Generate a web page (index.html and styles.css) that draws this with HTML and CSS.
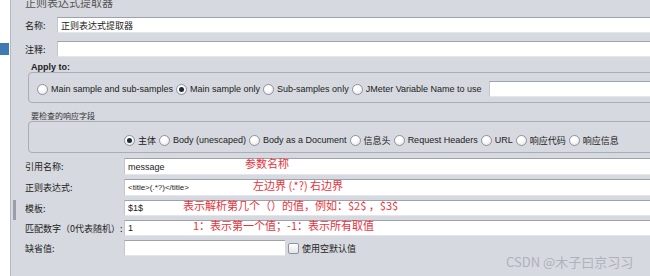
FILE: index.html
```html
<!DOCTYPE html>
<html>
<head>
    <title>正则表达式提取器</title>
    <link rel="stylesheet" href="styles.css">
</head>
<body>
    <div class="tree-strip">
        <div class="tree-marker"></div>
    </div>

    <div class="panel">
        <div class="title">正则表达式提取器</div>

        <div class="row top-row">
            <span class="label short">名称:</span>
            <div class="input">正则表达式提取器</div>
        </div>
        <div class="row top-row comment-row">
            <span class="label short">注释:</span>
            <div class="input"></div>
        </div>

        <div class="group-title bold">Apply to:</div>
        <div class="group apply-group">
            <span class="radio"></span><span class="opt">Main sample and sub-samples</span>
            <span class="radio checked"></span><span class="opt">Main sample only</span>
            <span class="radio"></span><span class="opt">Sub-samples only</span>
            <span class="radio"></span><span class="opt">JMeter Variable Name to use</span>
            <div class="input var-input"></div>
        </div>

        <div class="group-title cjk-title">要检查的响应字段</div>
        <div class="group field-group">
            <span class="radio checked"></span><span class="opt cjk">主体</span>
            <span class="radio"></span><span class="opt">Body (unescaped)</span>
            <span class="radio"></span><span class="opt">Body as a Document</span>
            <span class="radio"></span><span class="opt cjk">信息头</span>
            <span class="radio"></span><span class="opt">Request Headers</span>
            <span class="radio"></span><span class="opt">URL</span>
            <span class="radio"></span><span class="opt cjk">响应代码</span>
            <span class="radio"></span><span class="opt cjk">响应信息</span>
        </div>

        <div class="fields">
            <div class="row field tall">
                <span class="label">引用名称:</span>
                <div class="input">message<span class="note note-name">参数名称</span></div>
            </div>
            <div class="row field tall">
                <span class="label">正则表达式:</span>
                <div class="input small-value">&lt;title&gt;(.*?)&lt;/title&gt;<span class="note note-regex">左边界 (.*?) 右边界</span></div>
            </div>
            <div class="row field">
                <span class="label">模板:</span>
                <div class="input">$1$<span class="note note-template">表示解析第几个（）的值，例如：$2$ ，$3$</span></div>
            </div>
            <div class="row field">
                <span class="label">匹配数字（0代表随机）:</span>
                <div class="input">1<span class="note note-match">1：表示第一个值；-1：表示所有取值</span></div>
            </div>
            <div class="row field">
                <span class="label">缺省值:</span>
                <div class="input default-input"></div>
                <span class="checkbox"></span>
                <span class="opt cjk">使用空默认值</span>
            </div>
        </div>

        <div class="splitter"></div>
        <div class="watermark">CSDN @木子曰京习习</div>
    </div>
</body>
</html>
```

FILE: styles.css
```css
body {
    margin: 0;
    display: flex;
    height: 276px;
    overflow: hidden;
    background: #fff;
    font-family: 'Liberation Sans', 'Noto Sans CJK SC', sans-serif;
    font-size: 9px;
    color: #222;
}

.tree-strip {
    width: 10px;
    background: #fff;
}

.tree-marker {
    margin-top: 43px;
    width: 9px;
    height: 12px;
    background: #3e7bb5;
}

.panel {
    position: relative;
    flex: 1;
    background: #d6d9df;
    border-left: 1px solid #b4b8c0;
    padding-left: 14px;
    overflow: hidden;
}

.title {
    margin-top: -4px;
    font-family: 'Noto Sans CJK SC', sans-serif;
    font-size: 11px;
    line-height: 12px;
    color: #555;
}

.row {
    display: flex;
    align-items: center;
}

.top-row {
    margin-top: 9px;
    height: 16px;
}

.comment-row {
    margin-top: 8px;
}

.label {
    width: 99px;
    flex-shrink: 0;
    font-family: 'Noto Sans CJK SC', sans-serif;
    font-size: 9px;
    color: #222;
}

.label.short {
    width: 32px;
}

.input {
    position: relative;
    flex: 1;
    height: 100%;
    box-sizing: border-box;
    display: flex;
    align-items: center;
    padding-left: 3px;
    background: #fff;
    border-top: 1px solid #9ea2aa;
    border-left: 1px solid #c3c6cc;
    border-bottom: 1px solid #e4e6ea;
    font-family: 'Liberation Sans', 'Noto Sans CJK SC', sans-serif;
    font-size: 9px;
    color: #222;
    white-space: nowrap;
}

.group-title {
    padding-left: 6px;
    height: 10px;
    line-height: 10px;
    margin-top: 5px;
}

.bold {
    font-weight: bold;
    font-size: 9px;
}

.cjk-title {
    margin-top: 8px;
    font-family: 'Noto Sans CJK SC', sans-serif;
    font-size: 8px;
    color: #333;
}

.group {
    display: flex;
    align-items: center;
    margin-left: 3px;
    margin-right: -10px;
    box-sizing: border-box;
    border: 1px solid #a9adb5;
    border-radius: 4px;
    white-space: nowrap;
}

.apply-group {
    height: 31px;
    padding-top: 3px;
    padding-left: 8px;
}

.field-group {
    height: 32px;
    padding-top: 6px;
    padding-left: 95px;
}

.radio {
    width: 11px;
    height: 11px;
    box-sizing: border-box;
    border-radius: 50%;
    border: 1px solid #8f939b;
    background: radial-gradient(circle at 40% 35%, #fff 30%, #dcdfe4 100%);
    display: flex;
    align-items: center;
    justify-content: center;
    flex-shrink: 0;
}

.radio.checked::after {
    content: "";
    width: 5px;
    height: 5px;
    border-radius: 50%;
    background: #1f2a38;
}

.opt {
    margin-left: 3px;
    margin-right: 3px;
    color: #222;
}

.cjk {
    font-family: 'Noto Sans CJK SC', sans-serif;
    font-size: 9px;
}

.var-input {
    flex: 0 0 170px;
    height: 16px;
    margin-left: 4px;
}

.fields {
    margin-top: 5px;
}

.field {
    height: 16px;
    margin-top: 4px;
}

.field:first-child {
    margin-top: 0;
}

.field.tall {
    height: 17px;
}

.small-value {
    font-size: 8px;
}

.note {
    position: absolute;
    top: -3px;
    font-family: 'Noto Sans CJK SC', sans-serif;
    font-size: 11px;
    line-height: 14px;
    color: #e8323c;
}

.note-name { left: 120px; }
.note-regex { left: 128px; top: -2px; }
.note-template { left: 58px; }
.note-match { left: 68px; }

.default-input {
    flex: 0 0 161px;
}

.checkbox {
    width: 11px;
    height: 11px;
    margin-left: 3px;
    box-sizing: border-box;
    border: 1px solid #8f939b;
    border-radius: 2px;
    background: linear-gradient(#fff, #e2e4e8);
}

.splitter {
    position: absolute;
    left: 2px;
    top: 200px;
    width: 3px;
    height: 20px;
    background: #9a9ea6;
}

.watermark {
    position: absolute;
    left: 495px;
    top: 253px;
    font-family: 'Noto Sans CJK SC', sans-serif;
    font-size: 13px;
    line-height: 18px;
    color: #aeb2b9;
}
```
